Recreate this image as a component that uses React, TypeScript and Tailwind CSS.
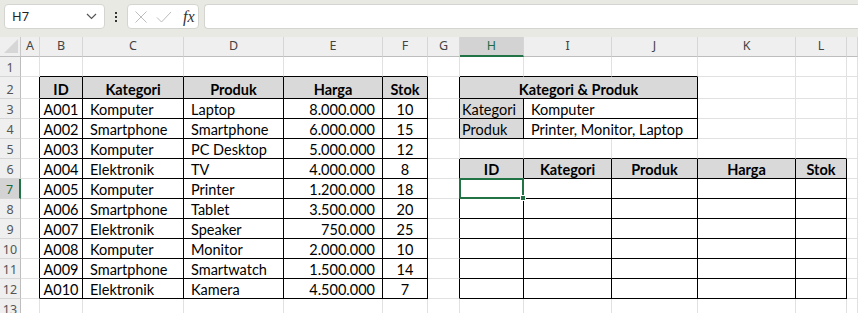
import React from "react";

type Cell = {
  text?: string;
  span?: number;
  align?: "left" | "center" | "right";
  bold?: boolean;
  fill?: boolean;
};

const COLS = ["A", "B", "C", "D", "E", "F", "G", "H", "I", "J", "K", "L", "M"];

const products: [string, string, string, string, string][] = [
  ["A001", "Komputer", "Laptop", "8.000.000", "10"],
  ["A002", "Smartphone", "Smartphone", "6.000.000", "15"],
  ["A003", "Komputer", "PC Desktop", "5.000.000", "12"],
  ["A004", "Elektronik", "TV", "4.000.000", "8"],
  ["A005", "Komputer", "Printer", "1.200.000", "18"],
  ["A006", "Smartphone", "Tablet", "3.500.000", "20"],
  ["A007", "Elektronik", "Speaker", "750.000", "25"],
  ["A008", "Komputer", "Monitor", "2.000.000", "10"],
  ["A009", "Smartphone", "Smartwatch", "1.500.000", "14"],
  ["A010", "Elektronik", "Kamera", "4.500.000", "7"],
];

// bordered ranges: [r1, c1, r2, c2], columns 1-based (A = 1)
const boxes = [
  [2, 2, 12, 6],
  [2, 8, 4, 10],
  [6, 8, 12, 12],
];

function inBox(r: number, c: number) {
  return boxes.some(([r1, c1, r2, c2]) => r >= r1 && r <= r2 && c >= c1 && c <= c2);
}

function buildRow(r: number): (Cell | null)[] {
  // index 0 = column A ... 12 = column M; null = covered by a merge
  const row: (Cell | null)[] = COLS.map(() => ({}));
  const hdr = (t: string): Cell => ({ text: t, align: "center", bold: true, fill: true });
  if (r === 2) {
    row[1] = hdr("ID");
    row[2] = hdr("Kategori");
    row[3] = hdr("Produk");
    row[4] = hdr("Harga");
    row[5] = hdr("Stok");
    row[7] = { ...hdr("Kategori & Produk"), span: 3 };
    row[8] = null;
    row[9] = null;
  }
  if (r >= 3 && r <= 12) {
    const p = products[r - 3];
    row[1] = { text: p[0], align: "center" };
    row[2] = { text: p[1] };
    row[3] = { text: p[2] };
    row[4] = { text: p[3], align: "right" };
    row[5] = { text: p[4], align: "center" };
  }
  if (r === 3) {
    row[7] = { text: "Kategori", fill: true };
    row[8] = { text: "Komputer", span: 2 };
    row[9] = null;
  }
  if (r === 4) {
    row[7] = { text: "Produk", fill: true };
    row[8] = { text: "Printer, Monitor, Laptop", span: 2 };
    row[9] = null;
  }
  if (r === 6) {
    row[7] = hdr("ID");
    row[8] = hdr("Kategori");
    row[9] = hdr("Produk");
    row[10] = hdr("Harga");
    row[11] = hdr("Stok");
  }
  return row;
}

const spanCls: Record<number, string> = { 1: "col-span-1", 2: "col-span-2", 3: "col-span-3" };

function SheetCell({ cell, r, c }: { cell: Cell; r: number; c: number }) {
  const span = cell.span ?? 1;
  const last = c + span - 1;
  const blackRight = inBox(r, last) || inBox(r, last + 1);
  let blackBottom = false;
  for (let k = c; k <= last; k++) if (inBox(r, k) || inBox(r + 1, k)) blackBottom = true;
  const selected = r === 7 && c === 8;
  const padLeft = c === 8 && (r === 3 || r === 4) ? "pl-[2px]" : "pl-[7px]";
  return (
    <div
      className={[
        "relative flex items-end whitespace-nowrap border-r border-b text-[14.5px] leading-[16px] text-black",
        blackRight ? "border-r-black" : "border-r-[#e1e1e1]",
        blackBottom ? "border-b-black" : "border-b-[#e1e1e1]",
        cell.fill ? "bg-[#d9d9d9]" : "bg-white",
        cell.bold ? "font-bold" : "",
        cell.align === "center"
          ? "justify-center"
          : cell.align === "right"
            ? "justify-end pr-[7px]"
            : padLeft,
        selected ? "z-10" : "",
      ].join(" ")}
    >
      {cell.text}
      {selected ? (
        <div className="absolute -top-[1px] -left-[1px] -right-[1px] -bottom-[1px] border-2 border-[#217346]">
          <div className="absolute -right-[4px] -bottom-[4px] h-[6px] w-[6px] border border-white bg-[#217346]" />
        </div>
      ) : null}
    </div>
  );
}

function Toolbar() {
  return (
    <div className="flex h-[37px] items-start bg-[#e9e9e3] pt-[4px] pl-[4px] font-['Noto_Sans',sans-serif]">
      <div className="flex h-[25px] w-[101px] items-center justify-between rounded-[4px] border border-[#d4d4d0] bg-white pr-[7px] pl-[7px] text-[13px] text-[#222]">
        <span>H7</span>
        <svg width="11" height="7" viewBox="0 0 11 7">
          <path d="M1 1l4.5 4.5L10 1" fill="none" stroke="#555" strokeWidth="1.2" />
        </svg>
      </div>
      <div className="flex h-[25px] w-[22px] flex-col items-center justify-center gap-[2px]">
        <span className="h-[2px] w-[2px] bg-[#333]" />
        <span className="h-[2px] w-[2px] bg-[#333]" />
        <span className="h-[2px] w-[2px] bg-[#333]" />
      </div>
      <div className="flex h-[25px] w-[72px] items-center rounded-[4px] border border-[#d4d4d0] bg-white pl-[5px]">
        <svg width="14" height="14" viewBox="0 0 14 14" className="ml-[1px]">
          <path d="M1.5 1.5l11 11M12.5 1.5l-11 11" stroke="#bcbcbc" strokeWidth="1" fill="none" />
        </svg>
        <svg width="16" height="14" viewBox="0 0 16 14" className="ml-[8px]">
          <path d="M1 7.5l4.5 4.5L15 2" stroke="#bcbcbc" strokeWidth="1" fill="none" />
        </svg>
        <span className="ml-[11px] font-['Liberation_Serif',serif] text-[16px] italic text-[#333]">fx</span>
      </div>
      <div className="ml-[5px] h-[25px] flex-1 rounded-l-[4px] border border-r-0 border-[#d4d4d0] bg-white" />
    </div>
  );
}

export default function App() {
  const rows = Array.from({ length: 13 }, (_, i) => i + 1);
  return (
    <div className="h-[313px] w-[858px] overflow-hidden bg-white font-['Lato',sans-serif]">
      <Toolbar />
      <div className="grid grid-cols-[21px_19px_43px_101px_100px_99px_45px_32px_64px_88px_86px_98px_51px_1fr]">
        {/* column header row */}
        <div className="relative h-[20px] border-r border-b border-r-[#c8c8c8] border-b-[#bdbdbd] bg-[#efefef]">
          <svg width="14" height="14" viewBox="0 0 14 14" className="absolute right-[2px] bottom-[3px]">
            <path d="M14 0L14 14L0 14Z" fill="#d6d6d6" />
          </svg>
        </div>
        {COLS.map((l) => (
          <div
            key={l}
            className={[
              "flex h-[20px] items-center justify-center border-r border-r-[#d6d6d6] font-['Noto_Sans',sans-serif] text-[12.5px]",
              l === "H"
                ? "border-b-2 border-b-[#217346] bg-[#d3d3d3] text-[#1e6b40]"
                : "border-b border-b-[#bdbdbd] bg-[#efefef] text-[#444]",
            ].join(" ")}
          >
            {l === "M" ? "" : l}
          </div>
        ))}
        {rows.map((r) => {
          const h = r === 2 ? "h-[22px]" : "h-[20px]";
          const cells = buildRow(r);
          return (
            <React.Fragment key={r}>
              <div
                className={[
                  "flex items-end justify-center font-['Noto_Sans',sans-serif] text-[12.5px] leading-[16px]",
                  h,
                  r === 7
                    ? "border-r-2 border-b border-r-[#217346] border-b-[#d6d6d6] bg-[#d3d3d3] text-[#1e6b40]"
                    : "border-r border-b border-r-[#bdbdbd] border-b-[#d6d6d6] bg-[#efefef] text-[#555]",
                ].join(" ")}
              >
                {r}
              </div>
              {cells.map((cell, i) =>
                cell ? (
                  <div key={i} className={`${h} ${spanCls[cell.span ?? 1]} grid ${r === 7 && i === 7 ? "z-10" : ""}`}>
                    <SheetCell cell={cell} r={r} c={i + 1} />
                  </div>
                ) : null,
              )}
            </React.Fragment>
          );
        })}
      </div>
    </div>
  );
}
